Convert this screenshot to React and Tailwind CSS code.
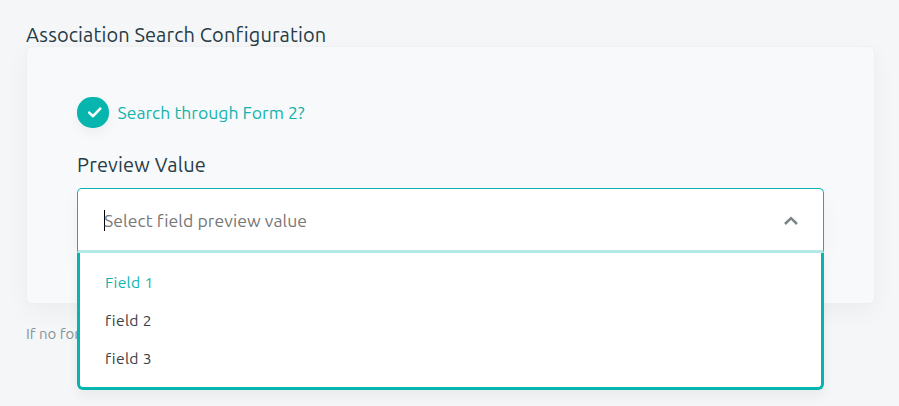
const options = [
  { label: 'Field 1', className: 'text-[#0ab5ae]' },
  { label: 'field 2', className: 'text-[#3b4045]' },
  { label: 'field 3', className: 'text-[#3b4045]' },
];

function Check() {
  return (
    <span className="flex h-[31px] w-8 items-center justify-center rounded-[15px] bg-[#06b5ae] shadow-[0_5px_12px_rgba(0,0,0,0.05)]">
      <svg width="16" height="13" viewBox="0 0 16 13" fill="none" className="ml-[3px]">
        <path d="M2.2 6.6 6 10.2 13.2 2.6" stroke="white" strokeWidth="2.6" strokeLinecap="round" strokeLinejoin="round" />
      </svg>
    </span>
  );
}

function PreviewSelect() {
  return (
    <div className="relative mt-[11px]">
      <div className="flex h-[65px] items-center justify-between rounded-t-[5px] border border-b-[3px] border-[#06b5ae] border-b-[#b4e9e6] bg-white pl-[26px] pr-6 pt-0.5 shadow-[0_8px_20px_rgba(0,0,0,0.04)]">
        <div className="flex items-center">
          <span className="-mr-px h-[21px] w-px bg-black" />
          <span className="text-[17.6px] leading-6 tracking-[0.06px] text-[#777]">Select field preview value</span>
        </div>
        <svg width="16" height="12" viewBox="0 0 16 12" fill="none">
          <path d="M2 9 8 3.2 14 9" stroke="#788287" strokeWidth="2.5" />
        </svg>
      </div>
      <ul className="absolute inset-x-0 top-full z-10 h-[137px] rounded-b-[6px] border-[3px] border-t-0 border-[#06b5ae] bg-white pt-[10px] shadow-[0_6px_12px_rgba(0,0,0,0.05)]">
        {options.map((option) => (
          <li key={option.label} className="flex h-[38px] items-center pl-[25px] text-[15.7px] leading-6 tracking-[0.3px]">
            <span className={option.className}>{option.label}</span>
          </li>
        ))}
      </ul>
    </div>
  );
}

export default function App() {
  return (
    <main className="h-[406px] overflow-hidden bg-[#f4f6f8] pl-[26px] pr-6 pt-[22px] font-['Ubuntu','Noto_Sans',sans-serif]">
      <h1 className="h-6 whitespace-nowrap text-[20px] leading-[26px] tracking-[0.1px] text-[#263b45]">Association Search Configuration</h1>
      <section className="h-[258px] rounded-[6px] border border-[#edeff1] bg-[#f8f9fb] px-[50px] pt-[50px] shadow-[0_8px_24px_rgba(0,0,0,0.04)]">
        <div className="flex h-[31px] items-center gap-[8.5px]">
          <Check />
          <span className="text-[17.6px] leading-6 text-[#12b3ac]">Search through Form 2?</span>
        </div>
        <h2 className="mt-6 h-[25px] text-[20px] leading-[25px] tracking-[0.18px] text-[#263b45]">Preview Value</h2>
        <PreviewSelect />
      </section>
      <p className="mt-[19px] whitespace-nowrap text-[15px] leading-[22px] text-[#87949a]">If no for</p>
    </main>
  );
}
